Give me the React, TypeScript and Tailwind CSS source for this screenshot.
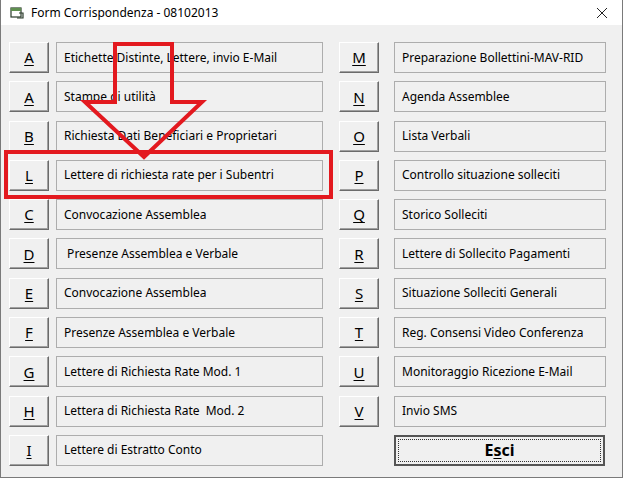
import React from 'react'

const left = [
  { k: 'A', t: 'Etichette Distinte, Lettere, invio E-Mail' },
  { k: 'A', t: 'Stampe di utilità' },
  { k: 'B', t: 'Richiesta Dati Beneficiari e Proprietari' },
  { k: 'L', t: 'Lettere di richiesta rate per i Subentri' },
  { k: 'C', t: 'Convocazione Assemblea' },
  { k: 'D', t: '\u00a0Presenze Assemblea e Verbale' },
  { k: 'E', t: 'Convocazione Assemblea' },
  { k: 'F', t: 'Presenze Assemblea e Verbale' },
  { k: 'G', t: 'Lettere di Richiesta Rate Mod. 1' },
  { k: 'H', t: 'Lettera di Richiesta Rate\u00a0 Mod. 2' },
  { k: 'I', t: 'Lettere di Estratto Conto' },
]

const right = [
  { k: 'M', t: 'Preparazione Bollettini-MAV-RID' },
  { k: 'N', t: 'Agenda Assemblee' },
  { k: 'O', t: 'Lista Verbali' },
  { k: 'P', t: 'Controllo situazione solleciti' },
  { k: 'Q', t: 'Storico Solleciti' },
  { k: 'R', t: 'Lettere di Sollecito Pagamenti' },
  { k: 'S', t: 'Situazione Solleciti Generali' },
  { k: 'T', t: 'Reg. Consensi Video Conferenza' },
  { k: 'U', t: 'Monitoraggio Ricezione E-Mail' },
  { k: 'V', t: 'Invio SMS' },
]

function KeyButton({ k }: { k: string }) {
  return (
    <div className="flex h-[31px] w-[40px] shrink-0 items-center justify-center border border-t-white border-l-white border-r-[#6b6b6b] border-b-[#6b6b6b] bg-[#f0f0f0] shadow-[inset_-1px_-1px_0_#a0a0a0] text-[15px] text-black underline underline-offset-2">
      {k}
    </div>
  )
}

function Label({ t, w }: { t: string; w: string }) {
  return (
    <div
      className={
        'flex h-[31px] items-center border border-[#adadad] bg-[#f0f0f0] pl-[7px] text-[12px] text-black whitespace-pre ' +
        w
      }
    >
      {t}
    </div>
  )
}

export default function App() {
  return (
    <div className="relative h-[480px] w-[624px] overflow-hidden bg-white" style={{ fontFamily: '"Noto Sans", sans-serif' }}>
      <div className="flex h-[478px] w-[623px] flex-col border-x border-b border-[#7a7a7a] bg-[#f0f0f0]">
        {/* Title bar */}
        <header className="flex h-[25px] shrink-0 items-center bg-white pl-[9px] pr-[8px]">
          <svg width="14" height="13" viewBox="0 0 14 13" className="mr-[7px]">
            <rect x="1" y="2" width="10" height="9" fill="none" stroke="#2a3a2a" strokeWidth="1.2" />
            <rect x="1" y="2" width="10" height="3" fill="#5f8f4f" />
            <path d="M9 7 L13 7 L13 12 L7 12" fill="none" stroke="#2a3a2a" strokeWidth="1.2" />
          </svg>
          <span className="text-[12px] text-black">Form Corrispondenza - 08102013</span>
          <svg width="12" height="12" viewBox="0 0 12 12" className="ml-auto mr-[6px]">
            <path d="M1 1 L11 11 M11 1 L1 11" stroke="#222" strokeWidth="1" />
          </svg>
        </header>

        {/* Body */}
        <div className="flex pl-[8px] pt-[17px]">
          <div className="flex flex-col gap-[8.3px]">
            {left.map((r, i) => (
              <div key={i} className="flex gap-[7px]">
                <KeyButton k={r.k} />
                <Label t={r.t} w="w-[267px]" />
              </div>
            ))}
          </div>
          <div className="ml-[16px] flex flex-col gap-[8.3px]">
            {right.map((r, i) => (
              <div key={i} className="flex gap-[15px]">
                <KeyButton k={r.k} />
                <Label t={r.t} w="w-[212px]" />
              </div>
            ))}
            <div className="ml-[55px] flex h-[31px] w-[211px] items-center justify-center border-2 border-[#555555] bg-[#f0f0f0] p-[2px]">
              <div className="flex h-full w-full items-center justify-center border border-dotted border-[#333]">
                <span className="text-[16px] font-bold text-black">
                  E<span className="underline underline-offset-2">s</span>ci
                </span>
              </div>
            </div>
          </div>
        </div>
      </div>

      {/* Red annotation overlay */}
      <svg className="pointer-events-none absolute left-0 top-0" width="624" height="480">
        <path
          d="M115 44 L172 44 L172 102 L202 102 L144 157 L85 102 L115 102 Z"
          fill="none"
          stroke="#e3191f"
          strokeWidth="4"
          strokeLinejoin="miter"
        />
        <rect x="6" y="152" width="325" height="45" fill="none" stroke="#e3191f" strokeWidth="4" />
      </svg>
    </div>
  )
}
